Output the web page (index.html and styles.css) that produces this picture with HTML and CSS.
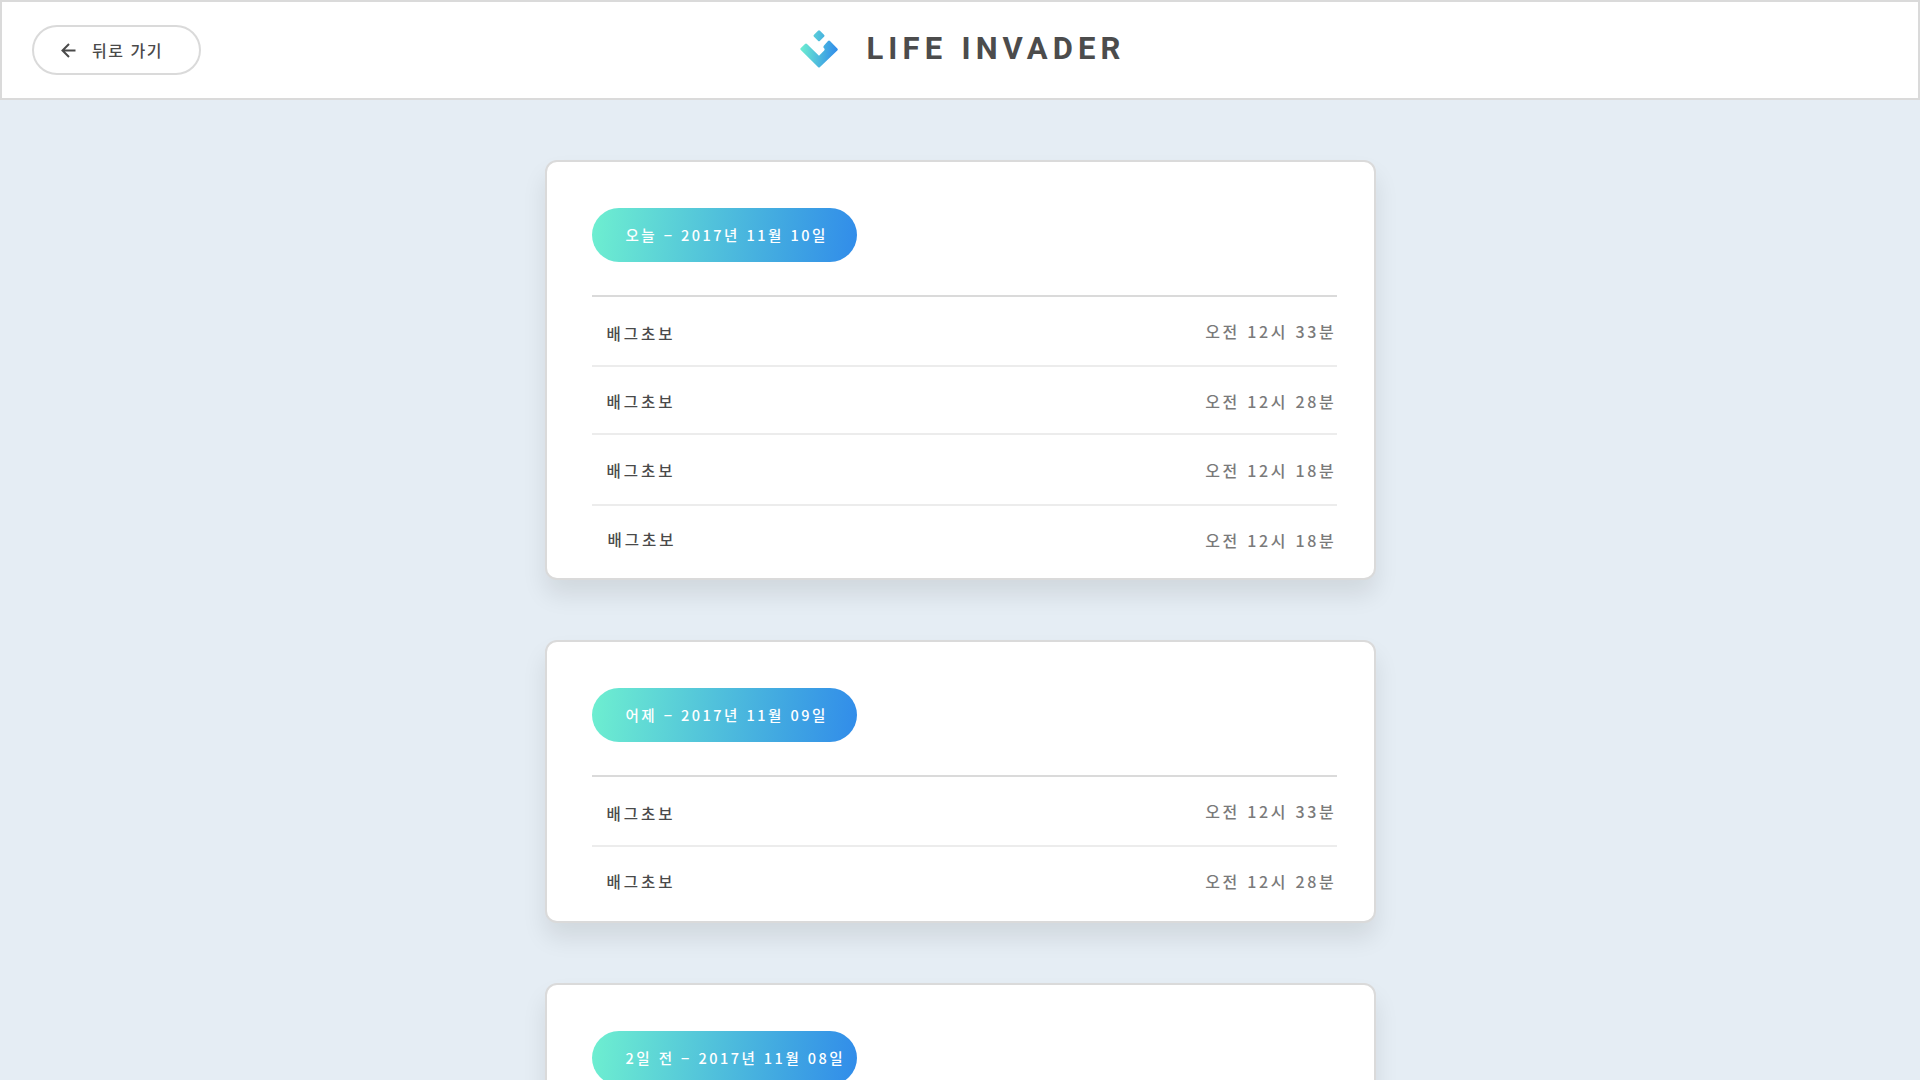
FILE: index.html
```html
<!DOCTYPE html>
<html lang="ko">
<head>
<meta charset="utf-8">
<title>LIFE INVADER</title>
<link rel="stylesheet" href="styles.css">
</head>
<body>
<header class="header">
  <button class="back" type="button">
    <svg class="back-icon" width="16" height="16" viewBox="0 0 16 16" fill="none" stroke="#4a4a4a" stroke-width="2"><path d="M15.500 8.500H2.500M9 2L2.500 8.500 9 15"/></svg>
    <span>뒤로 가기</span>
  </button>
  <div class="brand">
    <svg class="logo" width="38" height="38" viewBox="0 0 38 38">
      <defs><linearGradient id="g" gradientUnits="userSpaceOnUse" x1="0" y1="17" x2="38" y2="21"><stop offset="0" stop-color="#6eefd0"/><stop offset="1" stop-color="#2f8aea"/></linearGradient></defs>
      <path fill="url(#g)" d="M18 .7q1-1 2 0l4 4q1 1 0 2l-4 4q-1 1-2 0l-4-4q-1-1 0-2zM5 14q1-1 2 0L19 25.700 24.200 20.400q1-1.200-.2-2.200-1.200-1.200 0-2.600l4-4.500q1-1 2 0l7.300 7.300q1 1 0 2L20 37q-1 1-2 0L.8 20q-1-1 0-2z"/>
    </svg>
    <h1 class="title">LIFE INVADER</h1>
  </div>
</header>
<main class="feed">
  <section class="card">
    <h2 class="date">오늘 − 2017년 11월 10일</h2>
    <ul class="list">
      <li class="row first"><span class="name">배그초보</span><time class="time">오전 12시 33분</time></li>
      <li class="row second"><span class="name">배그초보</span><time class="time">오전 12시 28분</time></li>
      <li class="row third"><span class="name">배그초보</span><time class="time">오전 12시 18분</time></li>
      <li class="row fourth"><span class="name">배그초보</span><time class="time">오전 12시 18분</time></li>
    </ul>
  </section>
  <section class="card">
    <h2 class="date">어제 − 2017년 11월 09일</h2>
    <ul class="list">
      <li class="row first"><span class="name">배그초보</span><time class="time">오전 12시 33분</time></li>
      <li class="row last"><span class="name">배그초보</span><time class="time">오전 12시 28분</time></li>
    </ul>
  </section>
  <section class="card">
    <h2 class="date">2일 전 − 2017년 11월 08일</h2>
  </section>
</main>
</body>
</html>
```
FILE: styles.css
```css
* { box-sizing: border-box; }
body {
  display: flex;
  flex-direction: column;
  margin: 0;
  height: 1080px;
  overflow: hidden;
  background: #e5edf4;
  color: #4a4a4a;
  font-family: "Noto Sans CJK KR", sans-serif;
}
.header {
  flex: none;
  display: grid;
  grid-template-columns: 1fr auto 1fr;
  align-items: center;
  height: 100px;
  padding: 0 30px;
  border: 2px solid #dadada;
  background: #fff;
}
.back {
  display: flex;
  align-items: center;
  width: 169px;
  height: 50px;
  padding: 0 0 0 26px;
  border: 2px solid #dadada;
  border-radius: 25px;
  background: #fff;
  color: #4a4a4a;
  font: 500 16px/24px "Noto Sans CJK KR", sans-serif;
  letter-spacing: 1.5px;
  gap: 16px;
}
.brand { display: flex; align-items: center; gap: 28px; padding: 0 0 3px 6px; }
.title {
  margin: 0;
  color: #4c4c4c;
  font: 700 31px/40px Roboto, sans-serif;
  letter-spacing: 5.1px;
  word-spacing: 1.5px;
}
.feed {
  flex: 1;
  min-height: 0;
  overflow: hidden;
  display: flex;
  flex-direction: column;
  align-items: center;
  gap: 60px;
  padding-top: 60px;
}
.card {
  flex: none;
  width: 831px;
  padding: 46px 37px 0 45px;
  border: 2px solid #dadada;
  border-radius: 12px;
  background: #fff;
  box-shadow: 0 15px 25px rgba(0, 0, 0, .09);
}
.date {
  width: 265px;
  height: 54px;
  margin: 0 0 33px;
  padding-left: 34px;
  border-radius: 27px;
  background: linear-gradient(96deg, #6eefd0, #3fa5e2 74%, #318cea);
  color: #fff;
  font-size: 14.5px;
  font-weight: 500;
  line-height: 53px;
  letter-spacing: 2.5px;
  white-space: nowrap;
}
.list { margin: 0; padding: 0; list-style: none; border-top: 2px solid #dadada; }
.row {
  display: flex;
  justify-content: space-between;
  align-items: flex-start;
  height: 70px;
  padding: 24px 0 0 15px;
  border-bottom: 2px solid #ececec;
  font-size: 15.5px;
  line-height: 24px;
}
.name { font-weight: 500; letter-spacing: 3px; }
.time { color: #7a7a7a; font-size: 16px; font-weight: 500; letter-spacing: 2.7px; }
.first .time { margin-top: -2px; }
.second { height: 68px; padding-top: 22px; }
.third { height: 71px; padding-top: 23px; }
.fourth { height: 72px; padding: 21px 0 0 16px; border: 0; }
.fourth .time { margin-top: 1px; }
.last { height: 74px; padding-top: 22px; border: 0; }
```
